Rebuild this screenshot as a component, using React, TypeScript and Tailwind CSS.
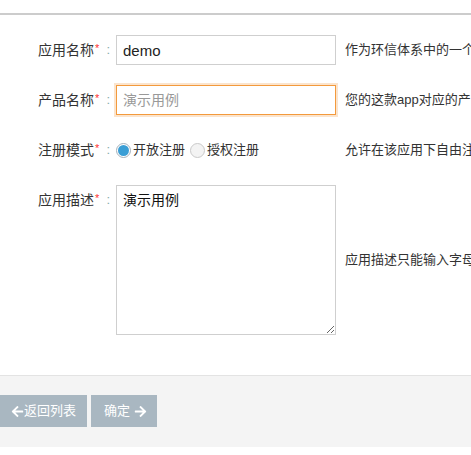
import React from "react";
import { FaArrowLeft, FaArrowRight } from "react-icons/fa";

const font = { fontFamily: '"Liberation Sans", "Noto Sans CJK SC", sans-serif' };

function Label({ text }: { text: string }) {
  return (
    <div className="w-[116px] shrink-0 h-[30px] flex items-center justify-end pr-[6px] text-[14px] text-[#333]">
      <span>{text}</span>
      <span className="text-[#f33] text-[11px] self-start mt-[5px] ml-[1px]">*</span>
      <span className="ml-[7px] text-[#8aa] text-[13px]">:</span>
    </div>
  );
}

function Help({ text, className = "" }: { text: string; className?: string }) {
  return (
    <div className={`ml-[9px] whitespace-nowrap text-[13px] text-[#333] ${className}`}>{text}</div>
  );
}

export default function App() {
  return (
    <div className="w-[471px] h-[455px] overflow-hidden bg-white relative" style={font}>
      <div className="h-[13px]" />
      <div className="border-t-2 border-[#cccccc]" />
      <div className="pt-[20px]">
        <div className="flex items-center mb-[20px] h-[30px]">
          <Label text="应用名称" />
          <input
            className="w-[220px] shrink-0 h-[30px] border border-[#cfcfcf] px-[6px] text-[15px] text-[#222] outline-none"
            defaultValue="demo"
          />
          <Help text="作为环信体系中的一个唯一标识，只能输入字母数字" />
        </div>
        <div className="flex items-center mb-[20px] h-[30px]">
          <Label text="产品名称" />
          <input
            className="w-[220px] shrink-0 h-[30px] border border-[#f39a3c] shadow-[0_0_0_2px_#fbe4cd] px-[6px] text-[14px] text-[#222] placeholder:text-[#999] outline-none"
            placeholder="演示用例"
          />
          <Help text="您的这款app对应的产品名称" />
        </div>
        <div className="flex items-center mb-[20px] h-[30px]">
          <Label text="注册模式" />
          <div className="w-[220px] shrink-0 flex items-center text-[13px] text-[#333]">
            <span className="w-[15px] h-[15px] rounded-full border border-[#a4b0ba] bg-white flex items-center justify-center">
              <span className="w-[11px] h-[11px] rounded-full bg-[#3a9ed5]" />
            </span>
            <span className="ml-[2px]">开放注册</span>
            <span className="ml-[5px] w-[15px] h-[15px] rounded-full border border-[#c9c9c9] bg-[#f3f3f3]" />
            <span className="ml-[2px]">授权注册</span>
          </div>
          <Help text="允许在该应用下自由注册新用户" />
        </div>
        <div className="flex items-start h-[150px]">
          <Label text="应用描述" />
          <textarea
            className="w-[220px] shrink-0 h-[150px] border border-[#cfcfcf] px-[6px] py-[4px] text-[14px] text-[#111] outline-none"
            defaultValue="演示用例"
          />
          <Help text="应用描述只能输入字母、数字、中文和下划线" className="self-center" />
        </div>
      </div>
      <div className="mt-[40px] border-t border-[#e3e3e3] bg-[#f4f4f4] h-[72px] pt-[19px] flex">
        <button className="h-[32px] w-[87px] bg-[#a9b7c1] text-white text-[13px] flex items-center pl-[11px]">
          <FaArrowLeft className="w-[13px] h-[13px]" />
          <span>返回列表</span>
        </button>
        <button className="ml-[4px] h-[32px] w-[66px] bg-[#a9b7c1] text-white text-[13px] flex items-center pl-[13px]">
          <span>确定</span>
          <FaArrowRight className="ml-[4px] w-[13px] h-[13px]" />
        </button>
      </div>
    </div>
  );
}
